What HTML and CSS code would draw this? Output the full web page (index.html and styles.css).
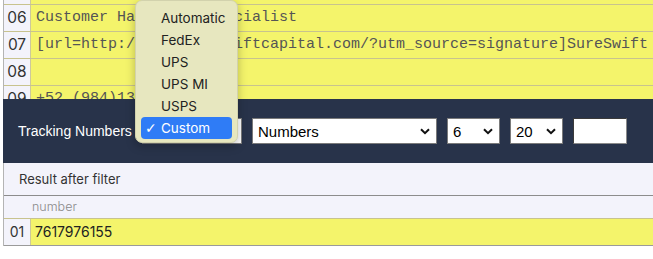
FILE: index.html
```html
<!doctype html>
<html lang="en">
  <head>
    <meta charset="UTF-8" />
    <meta name="viewport" content="width=device-width, initial-scale=1.0" />
    <title>Tracking Numbers Filter</title>
    <link rel="stylesheet" href="styles.css">
  </head>
  <body>
    <div class="page">
      <!-- Source lines -->
      <div class="editor">
        <div class="lines">
          <div class="row"><div class="num">05</div><div class="cell"></div></div>
          <div class="row"><div class="num">06</div><div class="cell">Customer Happiness Specialist</div></div>
          <div class="row"><div class="num">07</div><div class="cell">[url=http://www.sureswiftcapital.com/?utm_source=signature]SureSwift Capital[/url]</div></div>
          <div class="row"><div class="num">08</div><div class="cell"></div></div>
          <div class="row"><div class="num">09</div><div class="cell">+52 (984)135-7788</div></div>
        </div>
      </div>

      <!-- Filter toolbar -->
      <div class="toolbar">
        <span class="label">Tracking Numbers</span>
        <div class="select-wrap carrier">
          <select class="select">
            <option>Custom</option>
          </select>
          <svg class="chevron" width="10" height="7" viewBox="0 0 10 7"><path d="M1 1.2 L5 5.2 L9 1.2" fill="none" stroke="#111" stroke-width="2"/></svg>
        </div>
        <div class="select-wrap kind">
          <select class="select">
            <option>Numbers</option>
          </select>
          <svg class="chevron" width="10" height="7" viewBox="0 0 10 7"><path d="M1 1.2 L5 5.2 L9 1.2" fill="none" stroke="#111" stroke-width="2"/></svg>
        </div>
        <div class="select-wrap small">
          <select class="select">
            <option>6</option>
          </select>
          <svg class="chevron" width="10" height="7" viewBox="0 0 10 7"><path d="M1 1.2 L5 5.2 L9 1.2" fill="none" stroke="#111" stroke-width="2"/></svg>
        </div>
        <div class="select-wrap small">
          <select class="select">
            <option>20</option>
          </select>
          <svg class="chevron" width="10" height="7" viewBox="0 0 10 7"><path d="M1 1.2 L5 5.2 L9 1.2" fill="none" stroke="#111" stroke-width="2"/></svg>
        </div>
        <input class="text-input" type="text" />
      </div>

      <!-- Result -->
      <div class="result">
        <div class="result-title">Result after filter</div>
        <div class="result-head">number</div>
        <div class="row result-row"><div class="num">01</div><div class="cell">7617976155</div></div>
      </div>
    </div>

    <!-- Open carrier dropdown -->
    <div class="menu">
      <div class="menu-item">Automatic</div>
      <div class="menu-item">FedEx</div>
      <div class="menu-item">UPS</div>
      <div class="menu-item">UPS MI</div>
      <div class="menu-item">USPS</div>
      <div class="menu-item selected"><span class="check">✓</span>Custom</div>
    </div>
  </body>
</html>
```

FILE: styles.css
```css
* {
  margin: 0;
  padding: 0;
  box-sizing: border-box;
}

body {
  font-family: Inter, 'Liberation Sans', Arial, sans-serif;
  background: white;
  width: 653px;
  height: 259px;
  overflow: hidden;
  position: relative;
}

.page {
  margin-left: 3px;
}

.editor {
  height: 99px;
  overflow: hidden;
  border-left: 1px solid #b4b4b4;
}

.lines {
  margin-top: -22px;
}

.row {
  display: flex;
  height: 27px;
  border-bottom: 1px solid #c8c38e;
}

.num {
  width: 27px;
  flex-shrink: 0;
  background: #f3f3fb;
  border-right: 1px solid #cdc89c;
  color: #333;
  font-size: 15.5px;
  line-height: 26px;
  text-align: center;
}

.cell {
  flex: 1;
  background: #f4f46b;
  padding-left: 5px;
  font-family: 'Liberation Mono', 'Courier New', monospace;
  font-size: 15px;
  line-height: 26px;
  color: #555;
  white-space: nowrap;
  overflow: hidden;
}

.toolbar {
  height: 64px;
  background: #28334a;
  display: flex;
  align-items: center;
  gap: 10px;
  padding-left: 15px;
  padding-right: 26px;
}

.label {
  font-family: 'Liberation Sans', Arial, sans-serif;
  font-size: 14px;
  color: white;
}

.select-wrap {
  position: relative;
  height: 26px;
}

.select {
  appearance: none;
  -webkit-appearance: none;
  width: 100%;
  height: 26px;
  background: white;
  border: 1px solid #7a7a7a;
  border-radius: 0;
  font-family: 'Liberation Sans', Arial, sans-serif;
  font-size: 15px;
  color: #000;
  padding-left: 5px;
  outline: none;
}

.chevron {
  position: absolute;
  right: 7px;
  top: 10px;
  pointer-events: none;
}

.carrier {
  flex: 1;
}

.kind {
  width: 185px;
}

.small {
  width: 53px;
}

.text-input {
  width: 54px;
  height: 26px;
  background: white;
  border: 1px solid #8a8a8a;
  border-top-color: #3a3a3a;
  border-left-color: #3a3a3a;
  outline: none;
}

.result {
  border-left: 1px solid #b4b4b4;
}

.result-title {
  height: 33px;
  background: #f3f3fb;
  border-bottom: 1px solid #8c8c8c;
  padding-left: 15px;
  font-size: 13px;
  line-height: 32px;
  color: #333;
}

.result-head {
  height: 23px;
  background: #f3f3fb;
  border-bottom: 1px solid #c8c38e;
  padding-left: 28px;
  font-size: 12.5px;
  font-weight: 300;
  line-height: 22px;
  color: #8a8a8a;
}

.result-row {
  border-bottom-color: #9a9a9a;
}

.result-row .num {
  font-size: 14px;
}

.result-row .cell {
  font-family: Inter, 'Liberation Sans', Arial, sans-serif;
  font-size: 14px;
  color: #222;
  padding-left: 4px;
}

.menu {
  position: absolute;
  left: 135px;
  top: 0;
  width: 103px;
  height: 143px;
  background: #e7e7bf;
  border: 1px solid #d2d2ad;
  border-radius: 7px;
  box-shadow: 0 3px 10px rgba(0, 0, 0, 0.25);
  padding: 6px 5px 0;
}

.menu-item {
  height: 22px;
  line-height: 22px;
  padding-left: 20px;
  font-size: 13.5px;
  color: #222;
  position: relative;
}

.menu-item.selected {
  background: #2f7cf6;
  color: white;
  border-radius: 4px;
}

.check {
  position: absolute;
  left: 4px;
  top: 0;
  font-family: 'DejaVu Sans', sans-serif;
  font-size: 14px;
}
```
